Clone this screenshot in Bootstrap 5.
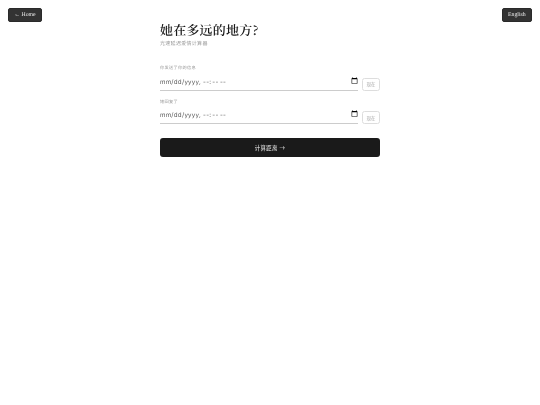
<!DOCTYPE html>
<html lang="zh">
<head>
<meta charset="utf-8">
<title>她在多远的地方?</title>
<link href="https://cdn.jsdelivr.net/npm/bootstrap@5.3.0/dist/css/bootstrap.min.css" rel="stylesheet">
<style>
html,body{height:100%;background:#fff;}
body{font-family:"Liberation Serif",serif;color:#1a1a1a;text-rendering:geometricPrecision;}
.topbar,.wrap{will-change:transform;}
.topbar{padding:8px 8px 0;}
.chip{background:#333;color:#eee;font-size:5.8px;line-height:1;padding:1.5px 5.25px 0;border:1px solid #2a2a2a;border-radius:2px;height:14px;display:flex;align-items:center;text-decoration:none;}
.wrap{width:220px;margin:-1px auto 0;}
.ttl{font-size:13px;line-height:18px;font-weight:600;letter-spacing:.2px;margin:0;font-family:"Noto Serif CJK SC","Liberation Serif","Noto Sans CJK SC",serif;color:#1a1a1a;}
.sub{font-size:5px;line-height:7px;color:#999;letter-spacing:.3px;margin:1.25px 0 0;font-family:"Noto Sans CJK SC",sans-serif;}
.lbl{font-size:4.2px;line-height:6px;color:#999;letter-spacing:.3px;margin:0 0 3.75px;display:block;font-family:"Noto Sans CJK SC",sans-serif;}
.dt{flex:1 1 auto;min-width:0;border:0;border-bottom:1px solid #ccc;background:transparent;padding:.5px 0 0;height:16px;font-family:"Inter",sans-serif;font-size:6.2px;color:#555;outline:0;letter-spacing:.25px;text-rendering:geometricPrecision;}
.dt::-webkit-datetime-edit-ampm-field{margin-left:-2px;}
.dt::-webkit-calendar-picker-indicator{margin:0;padding:0;width:7px;height:7px;position:relative;top:-2px;}
.now{width:18px;height:13px;flex:0 0 18px;background:#fff;border:1px solid #ddd;border-radius:2.5px;padding:0;font-size:4.4px;color:#aaa;font-family:"Noto Sans CJK SC",sans-serif;line-height:1;margin-top:3px;}
.go{background:#1a1a1a;color:#f5f5f5;border:0;border-radius:3px;height:19px;font-size:5.4px;letter-spacing:.4px;font-family:"Noto Sans CJK SC",sans-serif;padding:0;margin-top:14px;}
.blk1{margin-top:17.5px;}
.blk2{margin-top:8px;}
</style>
</head>
<body>
<div class="topbar d-flex justify-content-between align-items-start">
  <a class="chip" href="#">← Home</a>
  <a class="chip" href="#">English</a>
</div>
<main class="wrap">
  <h1 class="ttl">她在多远的地方?</h1>
  <p class="sub">光速延迟爱情计算器</p>
  <div class="blk1">
    <label class="lbl" for="a">你发送了你的信息</label>
    <div class="d-flex gap-1">
      <input id="a" class="dt" type="datetime-local">
      <button class="now" type="button">现在</button>
    </div>
  </div>
  <div class="blk2">
    <label class="lbl" for="b">她回复了</label>
    <div class="d-flex gap-1">
      <input id="b" class="dt" type="datetime-local">
      <button class="now" type="button">现在</button>
    </div>
  </div>
  <button class="go w-100 d-block" type="button">计算距离 →</button>
</main>
<script src="https://cdn.jsdelivr.net/npm/bootstrap@5.3.0/dist/js/bootstrap.bundle.min.js"></script>
</body>
</html>
